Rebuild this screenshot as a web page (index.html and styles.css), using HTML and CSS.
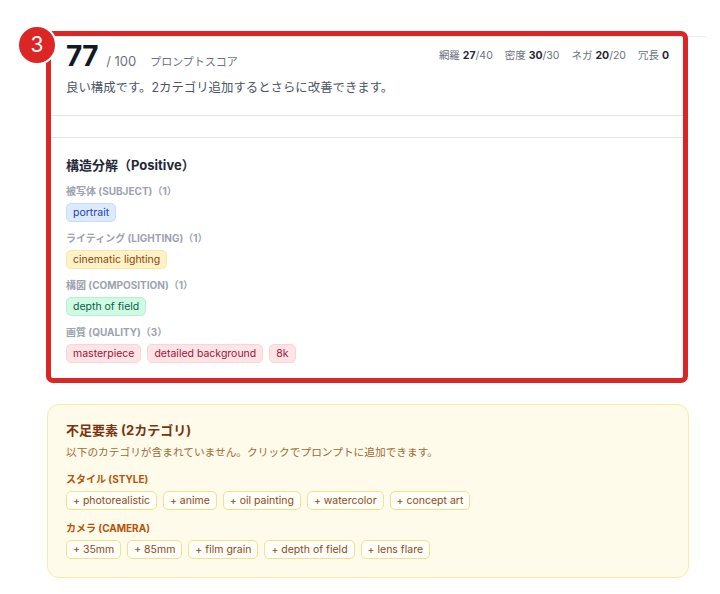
FILE: index.html
```html
<!DOCTYPE html>
<html lang="ja">
<head>
<meta charset="utf-8">
<link rel="stylesheet" href="styles.css">
</head>
<body>
<div class="wrap">
  <div class="col">
    <div class="highlight"></div>
    <div class="badge">3</div>

    <section class="card score-card">
      <div class="score-row">
        <div class="score-left">
          <span class="score-num">77</span>
          <span class="score-max">/ 100</span>
          <span class="score-label">プロンプトスコア</span>
        </div>
        <div class="metrics">
          <span class="metric">網羅 <b>27</b>/40</span>
          <span class="metric">密度 <b>30</b>/30</span>
          <span class="metric">ネガ <b>20</b>/20</span>
          <span class="metric">冗長 <b>0</b></span>
        </div>
      </div>
      <p class="score-desc">良い構成です。2カテゴリ追加するとさらに改善できます。</p>
    </section>

    <section class="card struct-card">
      <h3 class="card-title">構造分解（Positive）</h3>
      <div class="group">
        <div class="group-label">被写体 (SUBJECT)（1）</div>
        <div class="chips"><span class="chip chip-blue">portrait</span></div>
      </div>
      <div class="group">
        <div class="group-label">ライティング (LIGHTING)（1）</div>
        <div class="chips"><span class="chip chip-amber">cinematic lighting</span></div>
      </div>
      <div class="group">
        <div class="group-label">構図 (COMPOSITION)（1）</div>
        <div class="chips"><span class="chip chip-green">depth of field</span></div>
      </div>
      <div class="group">
        <div class="group-label">画質 (QUALITY)（3）</div>
        <div class="chips">
          <span class="chip chip-rose">masterpiece</span>
          <span class="chip chip-rose">detailed background</span>
          <span class="chip chip-rose">8k</span>
        </div>
      </div>
    </section>

    <section class="missing-card">
      <h3 class="missing-title">不足要素 (2カテゴリ)</h3>
      <p class="missing-desc">以下のカテゴリが含まれていません。クリックでプロンプトに追加できます。</p>
      <div class="mgroup">
        <div class="mlabel">スタイル (STYLE)</div>
        <div class="chips">
          <span class="add-chip">+ photorealistic</span>
          <span class="add-chip">+ anime</span>
          <span class="add-chip">+ oil painting</span>
          <span class="add-chip">+ watercolor</span>
          <span class="add-chip">+ concept art</span>
        </div>
      </div>
      <div class="mgroup">
        <div class="mlabel">カメラ (CAMERA)</div>
        <div class="chips">
          <span class="add-chip">+ 35mm</span>
          <span class="add-chip">+ 85mm</span>
          <span class="add-chip">+ film grain</span>
          <span class="add-chip">+ depth of field</span>
          <span class="add-chip">+ lens flare</span>
        </div>
      </div>
    </section>
  </div>
</div>
</body>
</html>
```

FILE: styles.css
```css
* { box-sizing: border-box; }
html, body { margin: 0; padding: 0; background: #ffffff; }
body {
  font-family: Inter, "Noto Sans CJK JP", sans-serif;
  color: #111827;
  width: 720px;
  height: 594px;
  overflow: hidden;
}
.wrap {
  margin: 36px 0 0 47px;
  width: 659px;
  border-top: 1px solid #eceef1;
}
.col {
  position: relative;
  width: 642px;
  display: flex;
  flex-direction: column;
}
.highlight {
  position: absolute;
  left: -1px;
  top: -6px;
  width: 642px;
  height: 352px;
  border: 5px solid #dc2626;
  border-radius: 7px;
  z-index: 5;
  pointer-events: none;
}
.badge {
  position: absolute;
  left: -30px;
  top: -12px;
  width: 40px;
  height: 40px;
  border-radius: 50%;
  background: #dc2626;
  border: 2px solid #ffffff;
  color: #ffffff;
  font-size: 21px;
  line-height: 36px;
  text-align: center;
  z-index: 6;
}
.card {
  background: #ffffff;
}
.score-card {
  padding: 2px 20px 18px 19px;
  border-bottom: 1px solid #e5e7eb;
}
.score-row {
  display: flex;
  justify-content: space-between;
  align-items: flex-start;
}
.score-left {
  display: flex;
  align-items: baseline;
}
.score-num {
  font-size: 28px;
  line-height: 34px;
  font-weight: 700;
  letter-spacing: -0.5px;
  color: #111827;
}
.score-max {
  font-size: 13px;
  color: #6b7280;
  margin-left: 8px;
}
.score-label {
  font-size: 11px;
  color: #6b7280;
  margin-left: 14px;
}
.metrics {
  display: flex;
  gap: 12px;
  margin-top: 9px;
  font-size: 10.5px;
  line-height: 16px;
  color: #6b7280;
}
.metric b {
  color: #1f2937;
  font-weight: 700;
}
.score-desc {
  margin: 6px 0 0;
  font-size: 12.4px;
  line-height: 18px;
  color: #4b5563;
}
.struct-card {
  margin-top: 21px;
  border-top: 1px solid #e5e7eb;
  padding: 18px 19px 16px;
}
.card-title {
  margin: 0;
  font-size: 13px;
  line-height: 18px;
  font-weight: 700;
  color: #1f2937;
}
.group { margin-top: 10px; }
.group + .group { margin-top: 9px; }
.group-label {
  font-size: 10px;
  line-height: 14px;
  font-weight: 700;
  color: #9ca3af;
}
.chips {
  display: flex;
  flex-wrap: wrap;
  gap: 6px;
  margin-top: 5px;
}
.chip {
  font-size: 10.5px;
  line-height: 15px;
  padding: 1px 6px;
  border: 1px solid transparent;
  border-radius: 5px;
}
.chip-blue { background: #dbeafe; border-color: #c7dcfb; color: #1e40af; }
.chip-amber { background: #fef3c7; border-color: #fce7a6; color: #92400e; }
.chip-green { background: #d1fae5; border-color: #b4f0d4; color: #065f46; }
.chip-rose { background: #ffe4e6; border-color: #fdd3d8; color: #9f1239; }

.missing-card {
  margin-top: 25px;
  background: #fffbea;
  border: 1px solid #fbeaa5;
  border-radius: 12px;
  padding: 16px 18px 18px;
}
.missing-title {
  margin: 0;
  font-size: 13px;
  line-height: 18px;
  font-weight: 700;
  color: #78350f;
}
.missing-desc {
  margin: 6px 0 0;
  font-size: 10.7px;
  line-height: 16px;
  color: #a16a34;
}
.mgroup { margin-top: 11px; }
.mlabel {
  font-size: 10px;
  line-height: 14px;
  font-weight: 700;
  color: #b45309;
}
.add-chip {
  font-size: 10.5px;
  line-height: 15px;
  padding: 1px 6px;
  background: #fffef7;
  border: 1px solid #f6df8e;
  border-radius: 5px;
  color: #8a4b1a;
}
```
